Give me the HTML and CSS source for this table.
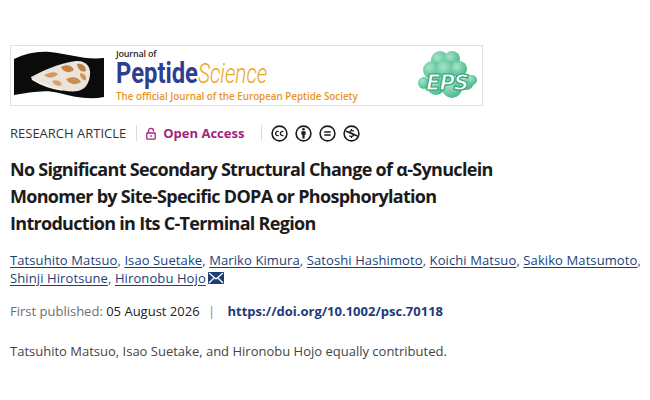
FILE: index.html
```html
<!DOCTYPE html>
<html lang="en">
<head>
<meta charset="utf-8">
<title>No Significant Secondary Structural Change of α-Synuclein Monomer</title>
<link rel="stylesheet" href="styles.css">
</head>
<body>
<div class="page">
  <div class="banner">
    <svg class="flag" width="90" height="50" viewBox="0 0 90 50">
      <path d="M0,8 C12,2 24,0 36,1 C55,3 70,9 90,7 L90,46 C75,49 60,46 45,42 C30,38 15,42 0,44 Z" fill="#0b0b0b"/>
      <path d="M17,26 C28,20 46,12 62,10 C72,9 77,16 76,24 C75,32 72,38 64,40 C52,42 30,36 17,27 Z" fill="#ebe4da"/>
      <path d="M30,24 C36,21 41,20 44,23 C41,27 35,28 30,24 Z" fill="#cf9a63"/>
      <path d="M47,16 C53,13 58,14 60,19 C55,23 49,21 47,16 Z" fill="#c58448"/>
      <path d="M52,28 C58,25 65,26 67,31 C61,35 55,33 52,28 Z" fill="#cb8e52"/>
      <path d="M63,13 C68,12 72,15 72,20 C68,22 64,19 63,13 Z" fill="#bf8046"/>
      <path d="M38,30 C43,28 47,30 48,34 C44,36 40,34 38,30 Z" fill="#d6a36f"/>
      <path d="M66,22 C70,22 73,25 72,29 C69,30 66,27 66,22 Z" fill="#d09659"/>
      <path d="M18,28 C26,33 36,37 48,39" stroke="#f7f3ec" stroke-width="1.6" fill="none"/>
    </svg>
    <div class="jtitle">
      <div class="jof">Journal of</div>
      <div class="jname"><span class="peptide">Peptide</span><span class="science">Science</span></div>
      <div class="jtag">The official Journal of the European Peptide Society</div>
    </div>
    <svg class="eps" width="62" height="52" viewBox="0 0 62 52">
      <defs>
        <radialGradient id="g" cx="0.35" cy="0.35" r="0.7">
          <stop offset="0" stop-color="#a6e3c8"/>
          <stop offset="1" stop-color="#45b98b"/>
        </radialGradient>
      </defs>
      <g fill="url(#g)">
        <circle cx="24" cy="10" r="9"/>
        <circle cx="36" cy="9" r="8"/>
        <circle cx="16" cy="20" r="9"/>
        <circle cx="30" cy="20" r="10"/>
        <circle cx="43" cy="19" r="8"/>
        <circle cx="20" cy="36" r="9"/>
        <circle cx="36" cy="38" r="10"/>
        <circle cx="50" cy="32" r="8"/>
        <circle cx="8" cy="33" r="6"/>
        <circle cx="56" cy="30" r="5"/>
      </g>
      <text x="31" y="40" text-anchor="middle" class="epstext">EPS</text>
    </svg>
  </div>

  <div class="meta">
    <span class="type">RESEARCH ARTICLE</span>
    <span class="sep"></span>
    <svg class="lock" width="10" height="13" viewBox="0 0 10 13">
      <path d="M2.5,6 V3.8 A2.5,2.5 0 0 1 7.5,3.8 V4.5" fill="none" stroke="#a3247c" stroke-width="1.3"/>
      <rect x="0.8" y="6" width="8.4" height="6.2" rx="0.8" fill="none" stroke="#a3247c" stroke-width="1.3"/>
      <rect x="4.4" y="8" width="1.2" height="2" fill="#a3247c"/>
    </svg>
    <span class="oa">Open Access</span>
    <span class="sep sep2"></span>
    <span class="cc">
      <svg width="17" height="17" viewBox="0 0 17 17">
        <circle cx="8.5" cy="8.5" r="7.4" fill="none" stroke="#1a1a1a" stroke-width="1.6"/>
        <path d="M7.6,6.6 A2.1,2.1 0 1 0 7.6,10.4 M12.4,6.6 A2.1,2.1 0 1 0 12.4,10.4" fill="none" stroke="#1a1a1a" stroke-width="1.4"/>
      </svg>
      <svg width="17" height="17" viewBox="0 0 17 17">
        <circle cx="8.5" cy="8.5" r="7.4" fill="none" stroke="#1a1a1a" stroke-width="1.6"/>
        <circle cx="8.5" cy="4.2" r="1.3" fill="#1a1a1a"/>
        <path d="M6.4,6.2 H10.6 V9.8 H9.6 V13.6 H7.4 V9.8 H6.4 Z" fill="#1a1a1a"/>
      </svg>
      <svg width="17" height="17" viewBox="0 0 17 17">
        <circle cx="8.5" cy="8.5" r="7.4" fill="none" stroke="#1a1a1a" stroke-width="1.6"/>
        <path d="M5.3,7 H11.7 M5.3,10 H11.7" stroke="#1a1a1a" stroke-width="1.5"/>
      </svg>
      <svg width="17" height="17" viewBox="0 0 17 17">
        <circle cx="8.5" cy="8.5" r="7.4" fill="none" stroke="#1a1a1a" stroke-width="1.6"/>
        <path d="M10.8,6.3 C10.2,5.4 7,5.2 6.7,6.8 C6.4,8.4 10.6,8.2 10.5,10.1 C10.3,11.8 7,11.6 6.2,10.6 M8.5,4 V5.4 M8.5,11.6 V13" fill="none" stroke="#1a1a1a" stroke-width="1.3"/>
        <path d="M2.6,6 L14.4,11" stroke="#1a1a1a" stroke-width="1.5"/>
      </svg>
    </span>
  </div>

  <h1 class="title">No Significant Secondary Structural Change of α-Synuclein Monomer by Site-Specific DOPA or Phosphorylation Introduction in Its C-Terminal Region</h1>

  <div class="authors">
    <a href="#">Tatsuhito Matsuo</a>, <a href="#">Isao Suetake</a>, <a href="#">Mariko Kimura</a>, <a href="#">Satoshi Hashimoto</a>, <a href="#">Koichi Matsuo</a>, <a href="#">Sakiko Matsumoto</a>,
    <a href="#">Shinji Hirotsune</a>, <a href="#">Hironobu Hojo</a><svg class="mail" width="16" height="12" viewBox="0 0 16 12"><rect x="0" y="0" width="16" height="12" fill="#1c3f78"/><path d="M1,1 L8,7 L15,1 M1,11 L6,6 M15,11 L10,6" stroke="#fff" stroke-width="1.3" fill="none"/></svg>
  </div>

  <div class="pub">
    <span class="label">First published:</span> <span class="date">05 August 2026</span>
    <span class="bar">|</span>
    <a class="doi" href="#">https://doi.org/10.1002/psc.70118</a>
  </div>

  <p class="note">Tatsuhito Matsuo, Isao Suetake, and Hironobu Hojo equally contributed.</p>
</div>
</body>
</html>
```

FILE: styles.css
```css
html, body {
  margin: 0;
  padding: 0;
  background: #ffffff;
}

body {
  font-family: "Open Sans", "Noto Sans", "DejaVu Sans", sans-serif;
  color: #222;
}

.page {
  padding: 45px 0 0 10px;
}

.banner {
  box-sizing: border-box;
  width: 473px;
  height: 61px;
  border: 1px solid #e1e1e1;
  display: flex;
  align-items: center;
  padding: 0 4px 0 3px;
}

.flag {
  display: block;
  flex: none;
}

.jtitle {
  margin-left: 12px;
  display: flex;
  flex-direction: column;
}

.jof {
  font-size: 9px;
  line-height: 9px;
  font-weight: 600;
  color: #2a2a2a;
  letter-spacing: -0.2px;
}

.jname {
  display: flex;
  align-items: baseline;
  height: 31px;
  line-height: 31px;
  white-space: nowrap;
}

.peptide {
  display: inline-block;
  font-family: "Roboto", "Open Sans", sans-serif;
  font-size: 29px;
  font-weight: 700;
  color: #2e3f8f;
  transform: scaleX(0.82);
  transform-origin: left center;
  margin-right: -18px;
}

.science {
  display: inline-block;
  font-family: "Roboto", "Open Sans", sans-serif;
  font-size: 27px;
  font-weight: 300;
  font-style: italic;
  color: #e9a623;
  transform: scaleX(0.77);
  transform-origin: left center;
}

.jtag {
  font-size: 9.8px;
  line-height: 12px;
  font-weight: 600;
  color: #e8951f;
  white-space: nowrap;
  margin-top: 2px;
}

.eps {
  display: block;
  margin-left: auto;
  flex: none;
}

.epstext {
  font-family: "DejaVu Sans", sans-serif;
  font-size: 21px;
  font-weight: 700;
  font-style: italic;
  fill: #ffffff;
  stroke: #2f9e72;
  stroke-width: 1.1px;
  letter-spacing: -1px;
}

.meta {
  display: flex;
  align-items: center;
  height: 20px;
  margin-top: 17px;
  font-size: 13px;
}

.type {
  color: #333;
}

.sep {
  width: 1px;
  height: 16px;
  background: #dcdcdc;
  margin: 0 9px 0 10px;
}

.sep2 {
  margin: 0 9px 0 17px;
}

.lock {
  display: block;
  margin-right: 7px;
}

.oa {
  color: #a3247c;
  font-weight: 700;
}

.cc {
  display: flex;
  gap: 7px;
}

.cc svg {
  display: block;
}

.title {
  margin: 13px 0 0 0;
  font-size: 18px;
  line-height: 27px;
  font-weight: 700;
  letter-spacing: -0.7px;
  color: #1b1b1b;
  width: 500px;
}

.authors {
  margin-top: 14px;
  width: 640px;
  font-size: 13px;
  line-height: 18px;
  color: #555;
  letter-spacing: 0.1px;
}

.authors a {
  color: #1c3f78;
  text-decoration: underline;
  text-underline-offset: 2px;
}

.mail {
  vertical-align: -1px;
  margin-left: 2px;
}

.pub {
  margin-top: 15px;
  font-size: 13px;
  line-height: 18px;
}

.label {
  color: #707070;
}

.date {
  color: #222;
}

.bar {
  color: #888;
  margin: 0 9px 0 5px;
}

.doi {
  color: #1e3b78;
  font-weight: 700;
  text-decoration: none;
}

.note {
  margin: 22px 0 0 0;
  font-size: 13px;
  line-height: 18px;
  color: #444;
}
```
